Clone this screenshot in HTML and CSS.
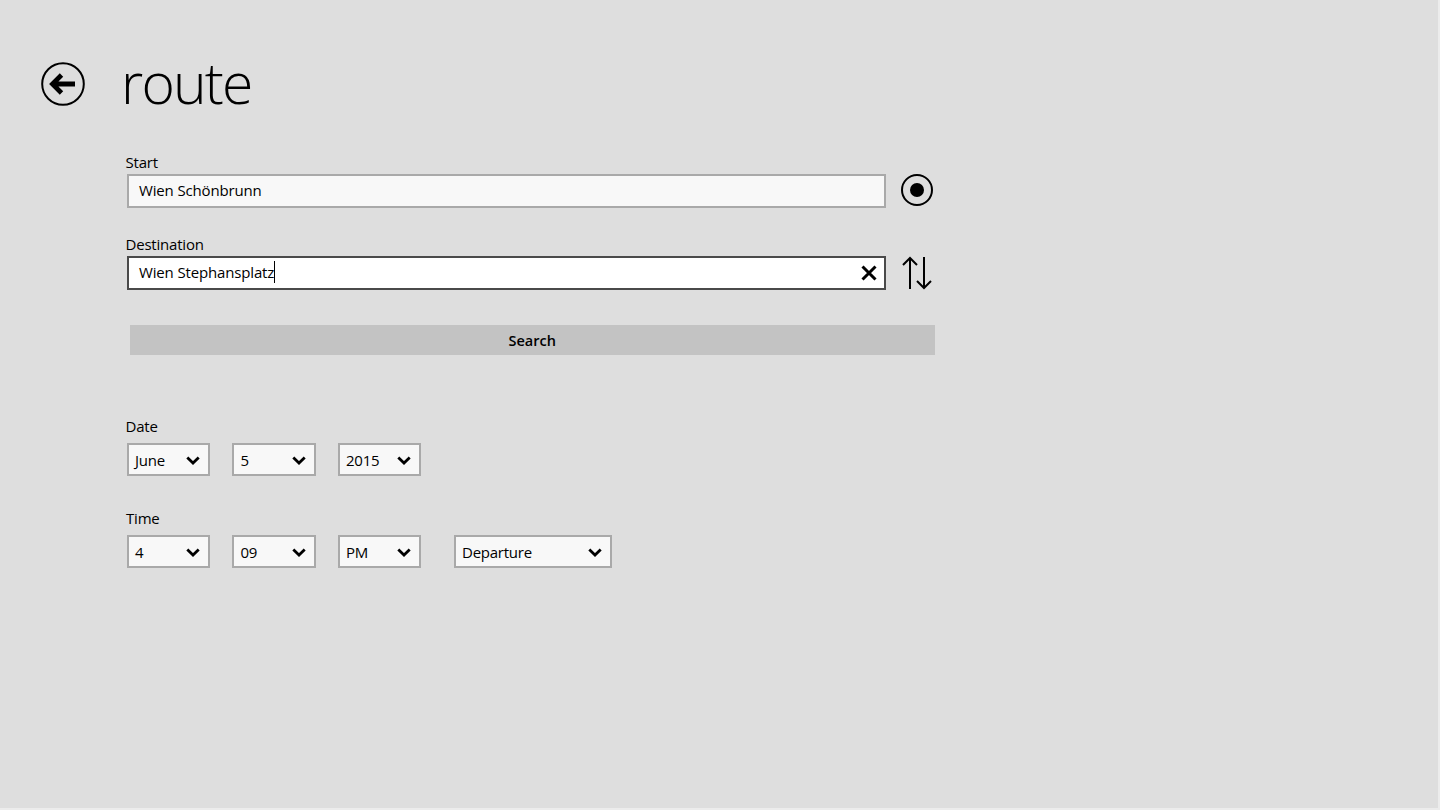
FILE: index.html
```html
<html>

<head>
    <meta charset="UTF-8">
    <meta name="viewport" content="width=device-width, initial-scale=1.0">
    <title>route</title>
    <link rel="stylesheet" href="styles.css">
</head>

<body>
    <div class="page">
        <div class="header">
            <svg class="back-icon" width="44" height="44" viewBox="0 0 44 44">
                <circle cx="22" cy="22" r="20.8" fill="none" stroke="#000" stroke-width="2"/>
                <path d="M11 22H34M20.500 13L11.500 22L20.500 31" fill="none" stroke="#000" stroke-width="4.800"/>
            </svg>
            <h1>route</h1>
        </div>

        <div class="form">
            <label>Start</label>
            <div class="input-row">
                <div class="text-box">Wien Schönbrunn</div>
                <svg class="side-icon" width="32" height="32" viewBox="0 0 32 32">
                    <circle cx="16" cy="16" r="15" fill="none" stroke="#000" stroke-width="2"/>
                    <circle cx="16" cy="16" r="7" fill="#000"/>
                </svg>
            </div>

            <label class="label-dest">Destination</label>
            <div class="input-row">
                <div class="text-box focused">
                    <span class="typed">Wien Stephansplatz</span>
                    <svg class="clear-icon" width="16" height="16" viewBox="0 0 16 16">
                        <path d="M1.500 1.500L14.500 14.500M14.500 1.500L1.500 14.500" fill="none" stroke="#000" stroke-width="3"/>
                    </svg>
                </div>
                <svg class="side-icon" width="32" height="34" viewBox="0 0 32 34">
                    <path d="M9 33V2M2 9L9 2L16 9M23 1V32M16 25L23 32L30 25" fill="none" stroke="#000" stroke-width="2"/>
                </svg>
            </div>

            <button class="search-btn">Search</button>

            <label class="label-date">Date</label>
            <div class="select-row">
                <div class="select"><span>June</span><svg width="14" height="9" viewBox="0 0 14 9"><path d="M1.300 1.500L7 7L12.700 1.500" fill="none" stroke="#000" stroke-width="2.800"/></svg></div>
                <div class="select"><span>5</span><svg width="14" height="9" viewBox="0 0 14 9"><path d="M1.300 1.500L7 7L12.700 1.500" fill="none" stroke="#000" stroke-width="2.800"/></svg></div>
                <div class="select"><span>2015</span><svg width="14" height="9" viewBox="0 0 14 9"><path d="M1.300 1.500L7 7L12.700 1.500" fill="none" stroke="#000" stroke-width="2.800"/></svg></div>
            </div>

            <label class="label-time">Time</label>
            <div class="select-row">
                <div class="select"><span>4</span><svg width="14" height="9" viewBox="0 0 14 9"><path d="M1.300 1.500L7 7L12.700 1.500" fill="none" stroke="#000" stroke-width="2.800"/></svg></div>
                <div class="select"><span>09</span><svg width="14" height="9" viewBox="0 0 14 9"><path d="M1.300 1.500L7 7L12.700 1.500" fill="none" stroke="#000" stroke-width="2.800"/></svg></div>
                <div class="select"><span>PM</span><svg width="14" height="9" viewBox="0 0 14 9"><path d="M1.300 1.500L7 7L12.700 1.500" fill="none" stroke="#000" stroke-width="2.800"/></svg></div>
                <div class="select wide"><span>Departure</span><svg width="14" height="9" viewBox="0 0 14 9"><path d="M1.300 1.500L7 7L12.700 1.500" fill="none" stroke="#000" stroke-width="2.800"/></svg></div>
            </div>
        </div>
    </div>
</body>

</html>
```

FILE: styles.css
```css
body {
    font-family: "Open Sans", "Noto Sans", sans-serif;
    margin: 0;
    height: 810px;
    overflow: hidden;
    background-color: #ececec;
    color: #000;
}

.page {
    box-sizing: border-box;
    width: 1438px;
    height: 808px;
    padding: 62px 0 0 41px;
    background-color: #dedede;
}

.header {
    display: flex;
    align-items: flex-start;
    gap: 36px;
    height: 90px;
}

.back-icon {
    display: block;
}

h1 {
    margin: -18px 0 0;
    font-size: 57px;
    font-weight: 300;
    line-height: 76px;
    letter-spacing: -1.8px;
}

.form {
    margin-left: 85px;
    width: 810px;
}

label {
    display: block;
    font-size: 15px;
    line-height: 20px;
    height: 22px;
    margin-left: -0.5px;
    letter-spacing: -0.2px;
}

.input-row {
    display: flex;
    align-items: flex-start;
    gap: 15px;
    margin-left: 0.5px;
}

.text-box {
    box-sizing: border-box;
    display: flex;
    align-items: center;
    justify-content: space-between;
    width: 759.500px;
    height: 34px;
    padding: 0 7px 2px 10.500px;
    font-size: 15px;
    letter-spacing: -0.15px;
    background-color: #f8f8f8;
    border: 2px solid #a9a9a9;
}

.text-box.focused {
    background-color: #fff;
    border-color: #4a4a4a;
}

.typed {
    border-right: 1px solid #000;
    line-height: 22px;
}

.clear-icon {
    margin-top: 2px;
}

.side-icon {
    display: block;
}

.label-dest {
    margin-top: 26px;
}

.search-btn {
    display: block;
    width: 805.500px;
    height: 30px;
    margin: 35px 0 0 3.500px;
    padding: 1px 0 0;
    border: none;
    background-color: #c3c3c3;
    font-family: inherit;
    font-size: 14.500px;
    font-weight: 600;
    color: #000;
}

.label-date {
    margin-top: 61px;
}

.label-time {
    margin-top: 32px;
    margin-left: 0;
}

.select-row {
    display: flex;
    gap: 22px;
    margin: 5px 0 0 0.5px;
}

.select {
    box-sizing: border-box;
    display: flex;
    align-items: center;
    justify-content: space-between;
    width: 83.500px;
    height: 33px;
    padding: 0 8px 0 6.500px;
    font-size: 15px;
    letter-spacing: -0.25px;
    background-color: #f8f8f8;
    border: 2px solid #a9a9a9;
}

.select svg {
    margin-top: 2px;
}

.select.wide {
    width: 158px;
    margin-left: 10.500px;
}
```
